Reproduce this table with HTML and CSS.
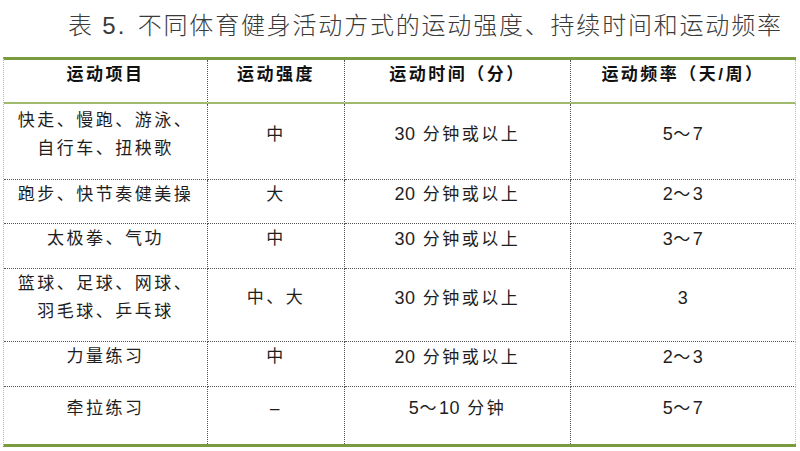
FILE: index.html
```html
<!DOCTYPE html>
<html lang="zh-CN">
<head>
<meta charset="utf-8">
<title>表5</title>
<link rel="stylesheet" href="styles.css">
</head>
<body>
<div class="page">
  <h1 class="title">表 <span class="tnum">5.</span> 不同体育健身活动方式的运动强度、持续时间和运动频率</h1>
  <div class="grid">
    <div class="cell head">运动项目</div>
    <div class="cell head">运动强度</div>
    <div class="cell head">运动时间（分）</div>
    <div class="cell head last">运动频率（天/周）</div>

    <div class="cell">快走、慢跑、游泳、<br>自行车、扭秧歌</div>
    <div class="cell">中</div>
    <div class="cell"><span><span class="num">30</span> 分钟或以上</span></div>
    <div class="cell last"><span><span class="num">5</span>～<span class="num">7</span></span></div>

    <div class="cell">跑步、快节奏健美操</div>
    <div class="cell">大</div>
    <div class="cell"><span><span class="num">20</span> 分钟或以上</span></div>
    <div class="cell last"><span><span class="num">2</span>～<span class="num">3</span></span></div>

    <div class="cell">太极拳、气功</div>
    <div class="cell">中</div>
    <div class="cell"><span><span class="num">30</span> 分钟或以上</span></div>
    <div class="cell last"><span><span class="num">3</span>～<span class="num">7</span></span></div>

    <div class="cell">篮球、足球、网球、<br>羽毛球、乒乓球</div>
    <div class="cell">中、大</div>
    <div class="cell"><span><span class="num">30</span> 分钟或以上</span></div>
    <div class="cell last"><span class="num">3</span></div>

    <div class="cell">力量练习</div>
    <div class="cell">中</div>
    <div class="cell"><span><span class="num">20</span> 分钟或以上</span></div>
    <div class="cell last"><span><span class="num">2</span>～<span class="num">3</span></span></div>

    <div class="cell bottom">牵拉练习</div>
    <div class="cell bottom">–</div>
    <div class="cell bottom"><span><span class="num">5</span>～<span class="num">10</span> 分钟</span></div>
    <div class="cell bottom last"><span><span class="num">5</span>～<span class="num">7</span></span></div>
  </div>
</div>
</body>
</html>
```
FILE: styles.css
```css
html, body {
  margin: 0;
  padding: 0;
  background: #ffffff;
}

.page {
  width: 800px;
  height: 451px;
  padding: 0 3px;
  box-sizing: border-box;
  font-family: "Liberation Sans", "Noto Sans CJK SC", sans-serif;
}

.title {
  margin: 0;
  padding: 11px 0 0 65px;
  height: 57px;
  box-sizing: border-box;
  font-size: 24px;
  line-height: 30px;
  font-weight: 300;
  letter-spacing: 1.8px;
  color: #3a3a3a;
  white-space: nowrap;
}

.tnum {
  letter-spacing: 2px;
  margin-right: 3px;
}

.grid {
  display: grid;
  width: 792px;
  grid-template-columns: 204px 137px 226px 225px;
  grid-template-rows: 44px 76px 44px 45px 73px 45px 57px;
  border-top: 3px solid #7b9b40;
  border-bottom: 3px solid #7b9b40;
  border-left: 1px dotted #b8b8b8;
  box-sizing: content-box;
}

.cell {
  display: flex;
  align-items: center;
  justify-content: center;
  text-align: center;
  box-sizing: border-box;
  padding: 0 4px 14px 4px;
  border-right: 1px dotted #555555;
  border-bottom: 1px dotted #555555;
  font-size: 17px;
  line-height: 28px;
  letter-spacing: 2.5px;
  color: #1e1e1e;
}

.num {
  letter-spacing: 0.5px;
  font-size: 18px;
}

.cell.last {
  border-right: 1px dotted #c0c0c0;
}

.cell.head {
  font-weight: bold;
  color: #111111;
  padding-bottom: 12px;
  border-bottom: 2px solid #9fba6c;
}

.cell.bottom {
  border-bottom: none;
}
```
